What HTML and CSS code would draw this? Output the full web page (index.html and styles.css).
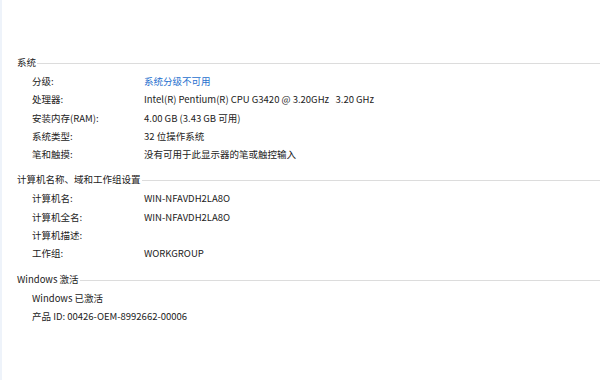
FILE: index.html
```html
<!DOCTYPE html>
<html lang="zh-CN">
<head>
<meta charset="utf-8">
<link rel="stylesheet" href="styles.css">
</head>
<body>
<div class="page">
  <section class="group">
    <div class="group-head"><span class="group-title">系统</span><span class="rule"></span></div>
    <div class="row"><span class="label">分级:</span><span class="value link">系统分级不可用</span></div>
    <div class="row"><span class="label">处理器:</span><span class="value">Intel(R) Pentium(R) CPU G3420 @ 3.20GHz&nbsp;&nbsp;&nbsp;3.20 GHz</span></div>
    <div class="row"><span class="label">安装内存(RAM):</span><span class="value">4.00 GB (3.43 GB 可用)</span></div>
    <div class="row"><span class="label">系统类型:</span><span class="value">32 位操作系统</span></div>
    <div class="row"><span class="label">笔和触摸:</span><span class="value">没有可用于此显示器的笔或触控输入</span></div>
  </section>
  <section class="group">
    <div class="group-head"><span class="group-title">计算机名称、域和工作组设置</span><span class="rule"></span></div>
    <div class="row"><span class="label">计算机名:</span><span class="value">WIN-NFAVDH2LA8O</span></div>
    <div class="row"><span class="label">计算机全名:</span><span class="value">WIN-NFAVDH2LA8O</span></div>
    <div class="row"><span class="label">计算机描述:</span><span class="value"></span></div>
    <div class="row"><span class="label">工作组:</span><span class="value">WORKGROUP</span></div>
  </section>
  <section class="group">
    <div class="group-head"><span class="group-title">Windows 激活</span><span class="rule"></span></div>
    <div class="row"><span class="single">Windows 已激活</span></div>
    <div class="row"><span class="single">产品 ID: 00426-OEM-8992662-00006</span></div>
  </section>
</div>
</body>
</html>
```

FILE: styles.css
```css
html, body {
  margin: 0;
  padding: 0;
  background: #ffffff;
}
body {
  width: 600px;
  height: 380px;
  overflow: hidden;
  font-family: "Noto Sans CJK SC", "Noto Sans", sans-serif;
  font-size: 9.5px;
  color: #222222;
  border-left: 2px solid #eef3fa;
  box-sizing: border-box;
}
.page {
  padding-top: 53px;
  padding-left: 15px;
}
.group {
  margin-bottom: 7px;
}
.group-head {
  display: flex;
  align-items: center;
  height: 18px;
  line-height: 18px;
  margin-bottom: 1px;
}
.group-title {
  white-space: nowrap;
}
.rule {
  flex: 1;
  height: 0;
  border-top: 1px solid #dcdcdc;
  margin-top: 3px;
  margin-left: 1px;
}
.row {
  display: flex;
  height: 18.3px;
  line-height: 18px;
  padding-left: 15px;
  white-space: nowrap;
}
.label {
  width: 112px;
  flex: none;
}
.link {
  color: #1e6fce;
}
```
